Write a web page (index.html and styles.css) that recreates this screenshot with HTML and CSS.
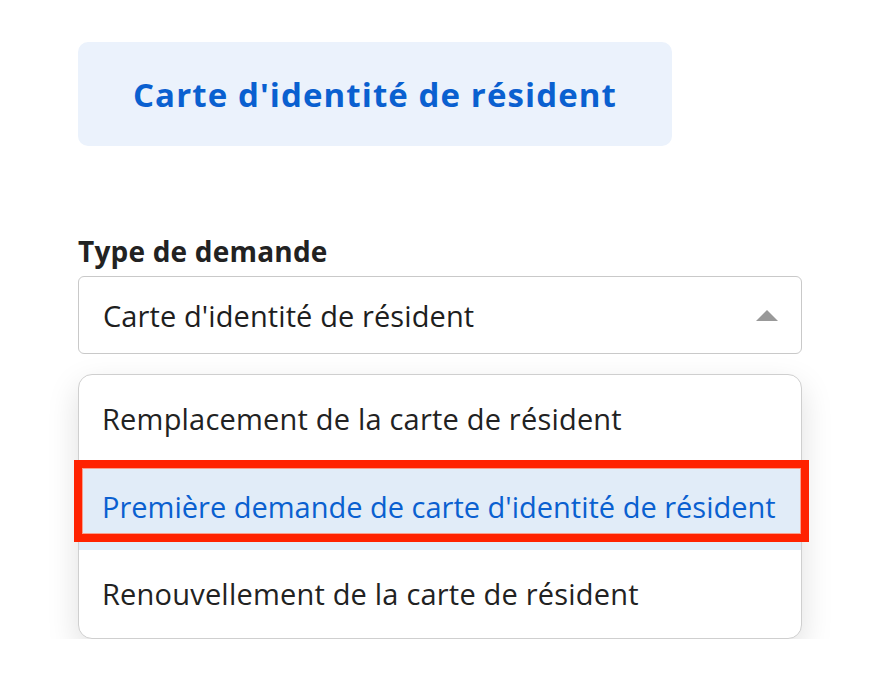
FILE: index.html
```html
<!DOCTYPE html>
<html lang="fr">
<head>
<meta charset="utf-8">
<link rel="stylesheet" href="styles.css">
</head>
<body>
<div class="page">
  <div class="title-card">Carte d'identité de résident</div>
  <div class="field">
    <div class="label">Type de demande</div>
    <div class="select">
      <span class="select-value">Carte d'identité de résident</span>
      <span class="caret"></span>
    </div>
    <ul class="menu">
      <li class="option">Remplacement de la carte de résident</li>
      <li class="option active">Première demande de carte d'identité de résident</li>
      <li class="option">Renouvellement de la carte de résident</li>
    </ul>
  </div>
</div>
</body>
</html>
```
FILE: styles.css
```css
*, *::before, *::after { box-sizing: border-box; }
html, body { margin: 0; background: #fff; }
body { font-family: "Open Sans", "Noto Sans", sans-serif; color: #222; }
.page { padding: 42px 78px 0 78px; width: 879px; }
.title-card {
  width: 594px; height: 104px;
  background: #ebf2fc; border-radius: 10px;
  display: flex; align-items: center; justify-content: center;
  color: #0a60d0; font-weight: 700; font-size: 33px; letter-spacing: 1.1px;
}
.field { margin-top: 90px; width: 724px; }
.label { font-weight: 700; font-size: 28px; letter-spacing: 0.2px; color: #222; line-height: 30px; margin-bottom: 10px; }
.select {
  height: 78px; border: 1.5px solid #c9c9c9; border-radius: 6px;
  display: flex; align-items: center; justify-content: space-between;
  padding: 0 23px 0 24px; font-size: 29px; color: #1e1e1e;
}
.select-value { letter-spacing: 0.1px; }
.caret {
  width: 0; height: 0;
  border-left: 11px solid transparent; border-right: 11px solid transparent;
  border-bottom: 11px solid #999;
}
.menu {
  list-style: none; margin: 20px 0 0 0; padding: 0;
  border: 1.5px solid #cfcfcf; border-radius: 14px; background: #fff;
  box-shadow: 0 12px 32px rgba(0,0,0,0.13);
}
.option {
  height: 87.5px; display: flex; align-items: center;
  padding-left: 23px; font-size: 29px; color: #222; letter-spacing: 0.2px;
}
.option.active {
  background: #e1ecf8; position: relative; color: #0a60d0; letter-spacing: 0;
}
.option.active::after {
  content: ""; position: absolute; left: -5px; right: -8px; top: -3px; height: 82px;
  border: 8px solid #ff2200; box-shadow: inset 0 0 0 1px #f7a08f;
}
```
